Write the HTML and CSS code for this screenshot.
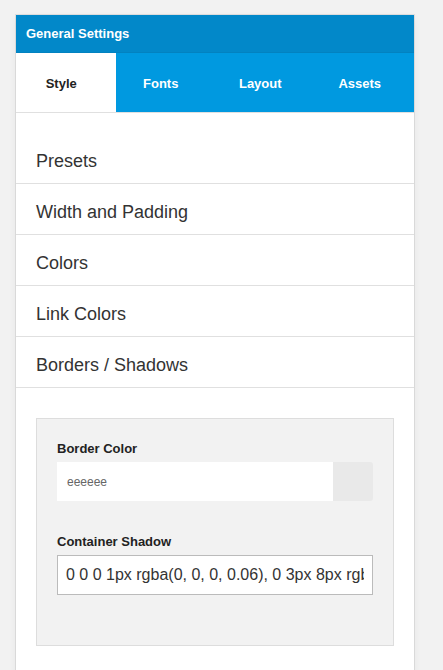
FILE: index.html
```html
<!DOCTYPE html>
<html>
<head>
<meta charset="utf-8">
<link rel="stylesheet" href="styles.css">
</head>
<body>
<div class="panel">
  <div class="panel-header">General Settings</div>
  <div class="tabs">
    <div class="tab active">Style</div>
    <div class="tab">Fonts</div>
    <div class="tab">Layout</div>
    <div class="tab">Assets</div>
  </div>
  <div class="sections">
    <div class="section">Presets</div>
    <div class="section">Width and Padding</div>
    <div class="section">Colors</div>
    <div class="section">Link Colors</div>
    <div class="section">Borders / Shadows</div>
  </div>
  <div class="body">
    <div class="box">
      <div class="field">
        <label class="label" for="bc">Border Color</label>
        <div class="color-row">
          <input id="bc" class="color-input" type="text" value="eeeeee">
          <div class="swatch"></div>
        </div>
      </div>
      <div class="field">
        <label class="label" for="cs">Container Shadow</label>
        <input id="cs" class="text-input" type="text" value="0 0 0 1px rgba(0, 0, 0, 0.06), 0 3px 8px rgba(0, 0, 0, 0.1)">
      </div>
    </div>
  </div>
</div>
</body>
</html>
```

FILE: styles.css
```css
html, body {
  margin: 0;
  padding: 0;
}
body {
  background: #f2f2f2;
  font-family: "Liberation Sans", Arial, sans-serif;
  color: #333;
  padding: 15px 0 0 16px;
}
.panel {
  width: 398px;
  background: #fff;
  box-shadow: 0 0 0 1px rgba(0, 0, 0, 0.08), 0 3px 8px rgba(0, 0, 0, 0.06);
  min-height: 700px;
}
.panel-header {
  height: 38px;
  background: #0288c9;
  color: #fff;
  font-weight: bold;
  font-size: 13px;
  line-height: 38px;
  padding-left: 10px;
  border-bottom: 1px solid #0282c0;
  box-sizing: border-box;
}
.tabs {
  display: flex;
  height: 60px;
  border-bottom: 1px solid #e0e0e0;
  box-sizing: border-box;
}
.tab {
  flex: 1;
  background: #0099e0;
  color: #fff;
  font-weight: bold;
  font-size: 13px;
  display: flex;
  align-items: center;
  justify-content: center;
  padding: 1px 9px 0 0;
}
.tab.active {
  background: #fff;
  color: #222;
}
.sections {
  padding-top: 20px;
}
.section {
  font-size: 18px;
  line-height: 20px;
  padding: 18px 20px 12px 20px;
  border-bottom: 1px solid #e0e0e0;
  color: #333;
}
.body {
  padding: 30px 20px 40px 20px;
}
.box {
  background: #f2f2f2;
  border: 1px solid #ddd;
  padding: 22px 20px 50px 20px;
  display: flex;
  flex-direction: column;
  gap: 33px;
}
.field {
  display: flex;
  flex-direction: column;
  gap: 5px;
}
.label {
  font-size: 13px;
  font-weight: bold;
  line-height: 16px;
  color: #222;
}
.color-row {
  display: flex;
  width: 316px;
  height: 39px;
}
.color-input {
  flex: 1;
  min-width: 0;
  margin: 0;
  border: none;
  outline: none;
  background: #fff;
  font-family: "Liberation Sans", Arial, sans-serif;
  font-size: 12px;
  color: #666;
  height: 39px;
  padding: 0 0 0 10px;
  box-sizing: border-box;
}
.swatch {
  width: 40px;
  background: #e9e9e9;
  border-radius: 0 3px 3px 0;
}
.text-input {
  width: 316px;
  box-sizing: border-box;
  height: 40px;
  margin: 0;
  border: 1px solid #bbb;
  border-radius: 0;
  outline: none;
  background: #fff;
  font-family: "Liberation Sans", Arial, sans-serif;
  font-size: 16px;
  padding: 0 8px;
  color: #333;
}
```
